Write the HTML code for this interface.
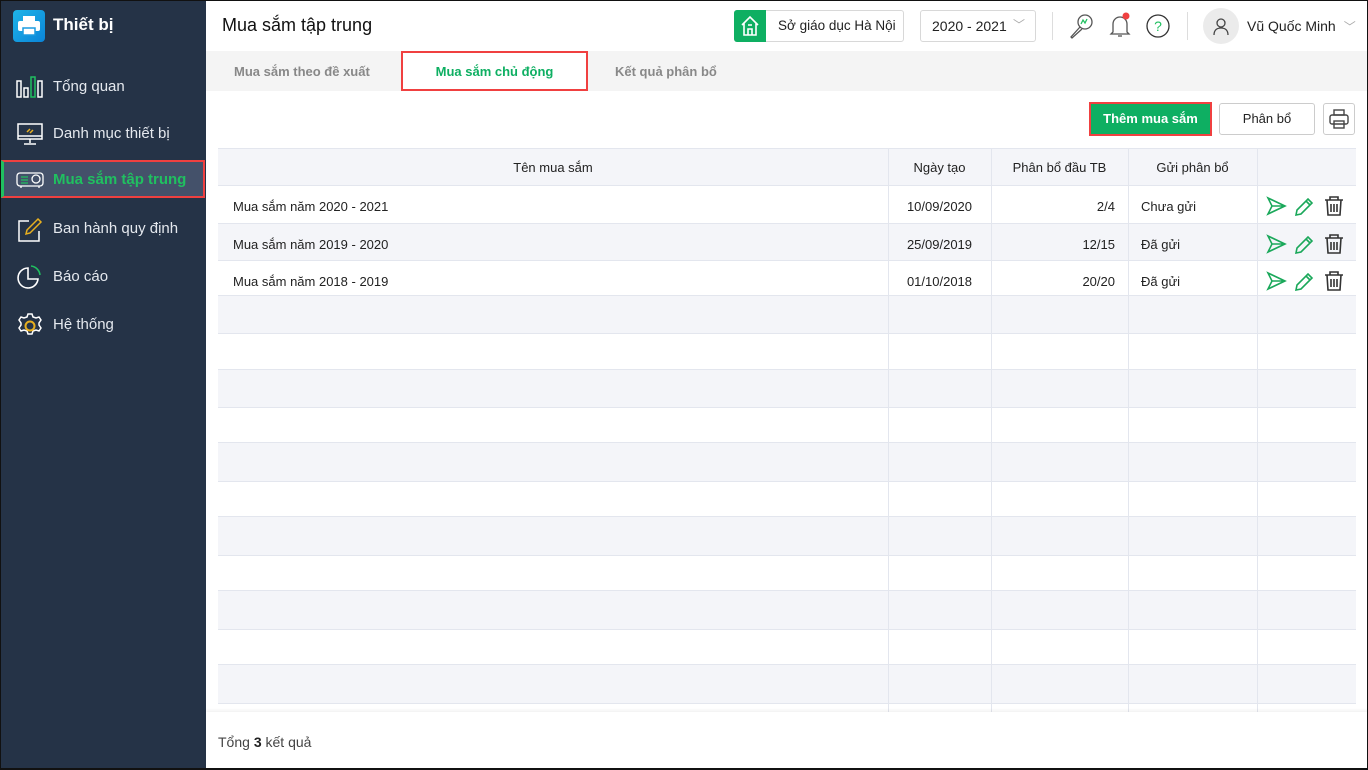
<!DOCTYPE html>
<html><head><meta charset="utf-8">
<style>
*{box-sizing:border-box;margin:0;padding:0}
body{width:1368px;height:770px;overflow:hidden;font-family:"Liberation Sans","Noto Sans CJK SC",sans-serif;font-size:13px;color:#222;background:#fff;position:relative}
.a{position:absolute}
#sb{left:0;top:0;width:206px;height:770px;background:#253347}
.mi{position:absolute;left:0;width:206px;height:40px;color:#e4e8ee;font-size:15px;line-height:40px;padding-left:53px}
.mi svg{position:absolute;left:16px;top:8px}
.row{position:absolute;left:218px;width:1138px;border-bottom:1px solid #e3e6ee}
.c{position:absolute;top:0;height:100%;border-left:1px solid #e3e6ee}
.t{position:absolute;font-size:13px}
</style></head><body>
<div id="sb" class="a">
  <div class="a" style="left:13px;top:10px;width:32px;height:32px;border-radius:4px;background:linear-gradient(135deg,#1fb5e8,#0a84d8)"></div>
  <svg class="a" style="left:17px;top:15px" width="24" height="22" viewBox="0 0 24 22"><rect x="6" y="1" width="12" height="5" fill="#fff"/><rect x="1" y="6" width="22" height="10" rx="2" fill="#fff"/><rect x="6" y="13" width="12" height="7" fill="#fff" stroke="#1a9be0" stroke-width="1.5"/></svg>
  <div class="a" style="left:53px;top:15px;color:#fff;font-size:17px;font-weight:bold">Thiết bị</div>
  <div class="mi" style="top:67px"><svg width="28" height="24" viewBox="0 0 28 24" fill="none" stroke="#fff" stroke-width="1.5"><rect x="1" y="6" width="4" height="16"/><rect x="8" y="13" width="4" height="9"/><rect x="15" y="2" width="4" height="20" stroke="#20c060"/><rect x="22" y="6" width="4" height="16"/></svg>Tổng quan</div>
  <div class="mi" style="top:114px"><svg width="28" height="24" viewBox="0 0 28 24" fill="none" stroke="#fff" stroke-width="1.5"><rect x="2" y="2" width="24" height="15"/><path d="M2 14H26M14 17v4M8 22h12"/><path d="M11 10l3-3M14 11l3-3" stroke="#e8b020"/></svg>Danh mục thiết bị</div>
  <div class="a" style="left:1px;top:160px;width:204px;height:38px;background:#44516a;border:2px solid #f04040;border-left:3px solid #20c060"></div>
  <div class="mi" style="top:161px;color:#20c060;font-weight:bold;height:38px;line-height:38px"><svg width="28" height="22" viewBox="0 0 28 22" fill="none" stroke="#fff" stroke-width="1.3" style="top:8px"><rect x="1" y="4" width="26" height="13" rx="3"/><circle cx="20" cy="10" r="4"/><path d="M5 8h7M5 11h7M5 14h7" stroke="#20c060"/><path d="M5 17v2M23 17v2"/></svg>Mua sắm tập trung</div>
  <div class="mi" style="top:209px"><svg width="28" height="26" viewBox="0 0 28 26" fill="none" stroke="#fff" stroke-width="1.5"><path d="M13 4H3v20h20V14"/><path d="M22 2l3 3-11 11-4 1 1-4z" stroke="#e8b020"/></svg>Ban hành quy định</div>
  <div class="mi" style="top:257px"><svg width="28" height="26" viewBox="0 0 28 26" fill="none" stroke="#fff" stroke-width="1.6"><path d="M12 3a10 10 0 1 0 10 11H12z"/><path d="M15 1a10 10 0 0 1 9 9" stroke="#20c060"/></svg>Báo cáo</div>
  <div class="mi" style="top:305px"><svg width="28" height="26" viewBox="0 0 28 26" fill="none" stroke="#fff" stroke-width="1.5"><path d="M12 1h4l1 3 3 1 3-1 2 3-2 3v2l2 3-2 3-3-1-3 1-1 3h-4l-1-3-3-1-3 1-2-3 2-3v-2l-2-3 2-3 3 1 3-1z"/><circle cx="14" cy="13" r="4.5" stroke="#e8b020" stroke-width="2"/></svg>Hệ thống</div>
</div>
<!-- header -->
<div class="a" style="left:222px;top:15px;font-size:18px;color:#111">Mua sắm tập trung</div>
<div class="a" style="left:734px;top:10px;width:170px;height:32px;border:1px solid #d8d8d8;border-radius:3px"></div>
<div class="a" style="left:734px;top:10px;width:32px;height:32px;background:#0eaf62;border-radius:3px 0 0 3px"></div>
<svg class="a" style="left:740px;top:15px" width="20" height="22" viewBox="0 0 20 22" fill="none" stroke="#fff" stroke-width="1.6"><path d="M2 10L10 2l8 8M4 8v12h12V8M8 20v-6h4v6M8 10h4"/></svg>
<div class="a" style="left:778px;top:18px;font-size:13.5px">Sở giáo dục Hà Nội</div>
<div class="a" style="left:920px;top:10px;width:116px;height:32px;border:1px solid #d8d8d8;border-radius:3px;font-size:14px;padding:7px 0 0 11px">2020 - 2021<span style="position:absolute;right:10px;top:5px;color:#aaa;font-size:12px">﹀</span></div>
<div class="a" style="left:1052px;top:12px;width:1px;height:28px;background:#ddd"></div>
<svg class="a" style="left:1068px;top:12px" width="28" height="28" viewBox="0 0 28 28" fill="none" stroke="#555" stroke-width="1.3"><circle cx="17" cy="10" r="7"/><path d="M12 15L3 25l1 1 10-9"/><path d="M13 12l2-4 2 3 2-4" stroke="#20c060"/></svg>
<svg class="a" style="left:1106px;top:10px" width="28" height="30" viewBox="0 0 28 30" fill="none" stroke="#555" stroke-width="1.3"><path d="M7 22V14a7 7 0 0 1 14 0v8l2 2H5z"/><path d="M12 26h4"/><circle cx="20" cy="6" r="3.5" fill="#f04040" stroke="none"/></svg>
<svg class="a" style="left:1145px;top:13px" width="26" height="26" viewBox="0 0 26 26" fill="none" stroke="#333" stroke-width="1.3"><circle cx="13" cy="13" r="11"/><text x="13" y="18" font-size="14" fill="#20c060" stroke="none" text-anchor="middle" font-family="Liberation Sans">?</text></svg>
<div class="a" style="left:1187px;top:12px;width:1px;height:28px;background:#ddd"></div>
<div class="a" style="left:1203px;top:8px;width:36px;height:36px;border-radius:50%;background:#ebebeb"></div>
<svg class="a" style="left:1211px;top:16px" width="20" height="20" viewBox="0 0 20 20" fill="none" stroke="#444" stroke-width="1.3"><circle cx="10" cy="7" r="4"/><path d="M3 19c0-5 3-7 7-7s7 2 7 7"/></svg>
<div class="a" style="left:1247px;top:18px;font-size:14px">Vũ Quốc Minh<span style="margin-left:8px;color:#aaa;font-size:12px">﹀</span></div>
<!-- tabs -->
<div class="a" style="left:206px;top:51px;width:1162px;height:40px;background:#f4f4f4"></div>
<div class="a" style="left:234px;top:64px;font-size:13px;font-weight:bold;color:#888">Mua sắm theo đề xuất</div>
<div class="a" style="left:401px;top:51px;width:187px;height:40px;background:#fff;border:2px solid #f04040;text-align:center;line-height:38px;font-weight:bold;color:#0eaf62">Mua sắm chủ động</div>
<div class="a" style="left:615px;top:64px;font-weight:bold;color:#888">Kết quả phân bổ</div>
<!-- buttons -->
<div class="a" style="left:1089px;top:102px;width:123px;height:34px;background:#0eaf62;border:2px solid #f04040;color:#fff;font-weight:bold;text-align:center;line-height:30px">Thêm mua sắm</div>
<div class="a" style="left:1219px;top:103px;width:96px;height:32px;border:1px solid #ccc;border-radius:3px;text-align:center;line-height:30px">Phân bổ</div>
<div class="a" style="left:1323px;top:103px;width:32px;height:32px;border:1px solid #ccc;border-radius:3px"></div>
<svg class="a" style="left:1328px;top:108px" width="22" height="22" viewBox="0 0 22 22" fill="none" stroke="#444" stroke-width="1.4"><rect x="6" y="2" width="10" height="5"/><rect x="2" y="7" width="18" height="9" rx="2"/><rect x="6" y="13" width="10" height="7"/></svg>
<!-- table -->
<div id="tb"></div>
<div class="a" style="left:206px;top:712px;width:1162px;height:58px;background:#fff;box-shadow:0 -2px 3px rgba(0,0,0,.05)"></div>
<div class="a" style="left:218px;top:734px;font-size:14px;color:#444">Tổng <b style="color:#222">3</b> kết quả</div>
<div class="a" style="left:0;top:0;width:1368px;height:770px;border:1px solid #111;border-width:1px 1px 2px 1px;pointer-events:none"></div>
<script>
var b=[148,186,224,261,296,334,370,408,443,482,517,556,591,630,665,704,740];
var h='';
var data=[["Mua sắm năm 2020 - 2021","10/09/2020","2/4","Chưa gửi"],["Mua sắm năm 2019 - 2020","25/09/2019","12/15","Đã gửi"],["Mua sắm năm 2018 - 2019","01/10/2018","20/20","Đã gửi"]];
for(var i=0;i<b.length-1;i++){var y=b[i],hh=b[i+1]-y;var bg=(i%2==0)?'#f4f5f9':'#fff';
if(i>=1&&i<=3)bg=(i==2)?'#f4f5f9':'#fff';
h+='<div class="row" style="top:'+y+'px;height:'+hh+'px;background:'+bg+(i==0?';border-top:1px solid #e3e6ee':'')+'">';
h+='<div class="c" style="left:670px"></div><div class="c" style="left:773px"></div><div class="c" style="left:910px"></div><div class="c" style="left:1039px"></div>';
var ty=Math.round(hh/2-8);
if(i==0){h+='<div class="t" style="left:0;width:670px;text-align:center;top:'+ty+'px">Tên mua sắm</div><div class="t" style="left:670px;width:103px;text-align:center;top:'+ty+'px">Ngày tạo</div><div class="t" style="left:773px;width:137px;text-align:center;top:'+ty+'px">Phân bổ đầu TB</div><div class="t" style="left:910px;width:129px;text-align:center;top:'+ty+'px">Gửi phân bổ</div>';}
else if(i<=3){var d=data[i-1];ty=13;
h+='<div class="t" style="left:15px;top:'+ty+'px">'+d[0]+'</div><div class="t" style="left:670px;width:103px;text-align:center;top:'+ty+'px">'+d[1]+'</div><div class="t" style="left:773px;width:124px;text-align:right;top:'+ty+'px">'+d[2]+'</div><div class="t" style="left:923px;top:'+ty+'px">'+d[3]+'</div>';
h+='<svg class="a" style="left:1048px;top:9px" width="95" height="22" viewBox="0 0 95 22" fill="none" stroke-width="1.6"><path d="M2 3l17 8-17 8 4-8z M6 11h13" stroke="#1aa85a"/><path d="M30 20l1-5 11-11 4 4-11 11z M40 6l4 4" stroke="#1aa85a"/><path d="M59 5h18M64 5V2h8v3M61 5l1 15h12l1-15M65 9v8M68 9v8M71 9v8" stroke="#333"/></svg>';}
h+='</div>';}
document.getElementById('tb').innerHTML=h;
</script>
</body></html>
